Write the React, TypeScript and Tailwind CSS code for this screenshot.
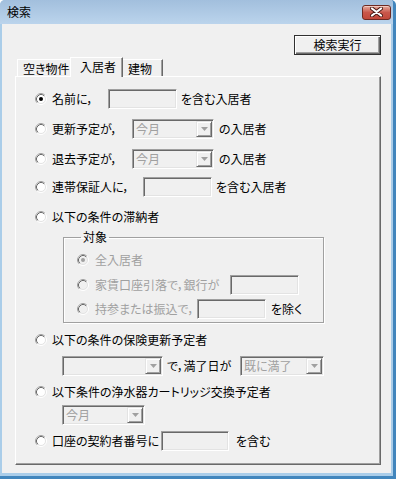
const sunken =
  "border border-t-[#a0a0a0] border-l-[#a0a0a0] border-r-white border-b-white shadow-[inset_1px_1px_0_#696969,inset_-1px_-1px_0_#e3e3e3]";

function Radio({ checked = false, disabled = false }: { checked?: boolean; disabled?: boolean }) {
  return (
    <svg width="12" height="12" viewBox="0 0 12 12" className="shrink-0">
      <circle cx="6" cy="6" r="4.5" fill={disabled ? "#f0f0f0" : "#ffffff"} />
      <circle cx="6" cy="6" r="5.5" fill="none" stroke="#ffffff" />
      <path d="M2.11 9.89 A5.5 5.5 0 0 1 9.89 2.11" fill="none" stroke="#a0a0a0" />
      <circle cx="6" cy="6" r="4.5" fill="none" stroke="#e3e3e3" />
      <path d="M2.82 9.18 A4.5 4.5 0 0 1 9.18 2.82" fill="none" stroke="#696969" />
      {checked && <circle cx="6" cy="6" r="2" fill={disabled ? "#a0a0a0" : "#000000"} />}
    </svg>
  );
}

function Edit({ className }: { className: string }) {
  return <div className={`h-[20px] shrink-0 bg-[#f0f0f0] ${sunken} ${className}`} />;
}

function Combo({ className, value = "" }: { className: string; value?: string }) {
  return (
    <div className={`flex h-[20px] shrink-0 items-stretch bg-[#f0f0f0] p-[1px] ${sunken} ${className}`}>
      <span className="flex flex-1 items-center pl-[2px] text-[#a0a0a0]">{value}</span>
      <span className="flex w-[16px] items-center justify-center border border-t-[#e3e3e3] border-l-[#e3e3e3] border-r-[#696969] border-b-[#696969] bg-[#f0f0f0] shadow-[inset_1px_1px_0_#ffffff,inset_-1px_-1px_0_#a0a0a0]">
        <svg width="7" height="4" viewBox="0 0 7 4">
          <path d="M0 0h7L3.5 4z" fill="#a0a0a0" />
        </svg>
      </span>
    </div>
  );
}

export default function App() {
  return (
    <div className="flex h-[479px] w-[396px] flex-col overflow-hidden rounded-t-[5px] border-r-[3px] border-b-[3px] border-[#4286bd] bg-[#aacde9] font-['Noto_Sans_CJK_JP',sans-serif] text-[12px] leading-none text-black [font-feature-settings:'palt']">
      {/* title bar */}
      <div className="flex h-[24px] shrink-0 items-center bg-gradient-to-b from-[#a2bfdd] to-[#bbd4ec] pl-[7px] pr-[2px]">
        <span className="text-[12px]">検索</span>
        <button className="ml-auto flex h-[15px] w-[29px] items-center justify-center rounded-[3px] border border-[#6e2a22] bg-gradient-to-b from-[#e4aa9d] via-[#c9574b] to-[#c2483a] shadow-[inset_0_1px_0_#f2c9bf]">
          <svg width="13" height="10" viewBox="0 0 13 10">
            <path d="M2 1.5L11 8.5M11 1.5L2 8.5" stroke="#4a1a14" strokeWidth="4" strokeLinecap="round" />
            <path d="M2 1.5L11 8.5M11 1.5L2 8.5" stroke="#ffffff" strokeWidth="2.2" strokeLinecap="round" />
          </svg>
        </button>
      </div>

      {/* frame */}
      <div className="flex flex-1 px-[2px] pb-[3px]">
        <div className="flex flex-1 flex-col bg-[#f0f0f0] pl-[13px] pr-[10px] pt-[11px]">
          <div className="flex justify-end">
            <button className="flex h-[20px] w-[87px] items-center justify-center border border-[#303030] bg-[#f0f0f0] shadow-[inset_1px_1px_0_#ffffff,inset_-1px_-1px_0_#696969,inset_-2px_-2px_0_#a0a0a0]">
              検索実行
            </button>
          </div>

          {/* tabs */}
          <div className="mt-[2px] flex h-[19px] items-end pl-[2px]">
            <div className="flex h-[17px] w-[53px] items-center border-t border-l border-white pl-[5px] pt-[1px]">空き物件</div>
            <div className="relative z-10 -mb-[1px] flex h-[20px] w-[53px] items-center border-t border-l border-r border-t-white border-l-white border-r-[#696969] bg-[#f0f0f0] pb-[1px] pl-[9px] shadow-[inset_-1px_0_0_#a0a0a0]">
              入居者
            </div>
            <div className="flex h-[17px] w-[40px] items-center border-t border-r border-t-white border-r-[#696969] pl-[5px] pt-[1px] shadow-[inset_-1px_0_0_#a0a0a0]">
              建物
            </div>
          </div>

          {/* panel */}
          <div className="flex h-[389px] w-[366px] flex-col border border-t-white border-l-white border-r-[#696969] border-b-[#696969] pl-[19px] pt-[12px] shadow-[inset_-1px_-1px_0_#a0a0a0]">
            <div className="flex h-[20px] items-center">
              <Radio checked />
              <span className="ml-[5px] w-[56px] shrink-0">名前に，</span>
              <Edit className="w-[69px]" />
              <span className="ml-[4px]">を含む入居者</span>
            </div>
            <div className="mt-[10px] flex h-[20px] items-center">
              <Radio />
              <span className="ml-[5px] w-[80px] shrink-0">更新予定が，</span>
              <Combo className="w-[82px]" value="今月" />
              <span className="ml-[5px]">の入居者</span>
            </div>
            <div className="mt-[10px] flex h-[20px] items-center">
              <Radio />
              <span className="ml-[5px] w-[80px] shrink-0">退去予定が，</span>
              <Combo className="w-[82px]" value="今月" />
              <span className="ml-[5px]">の入居者</span>
            </div>
            <div className="mt-[8px] flex h-[20px] items-center">
              <Radio />
              <span className="ml-[5px] w-[91px] shrink-0">連帯保証人に，</span>
              <Edit className="w-[69px]" />
              <span className="ml-[4px]">を含む入居者</span>
            </div>
            <div className="mt-[10px] flex h-[20px] items-center">
              <Radio />
              <span className="ml-[5px]">以下の条件の滞納者</span>
            </div>

            <fieldset className="ml-[28px] mt-[2px] w-[261px] border border-[#a0a0a0] pb-[3px] pl-[13px] shadow-[inset_1px_1px_0_#ffffff,1px_1px_0_#ffffff]">
              <legend className="ml-[4px] px-[2px] leading-[16px]">対象</legend>
              <div className="mt-[5px] flex h-[20px] items-center text-[#a0a0a0]">
                <Radio checked disabled />
                <span className="ml-[6px]">全入居者</span>
              </div>
              <div className="mt-[5px] flex h-[20px] items-center text-[#a0a0a0]">
                <Radio disabled />
                <span className="ml-[6px] w-[135px] shrink-0">家賃口座引落で，銀行が</span>
                <Edit className="w-[69px]" />
              </div>
              <div className="mt-[4px] flex h-[20px] items-center">
                <Radio disabled />
                <span className="ml-[6px] w-[102px] shrink-0 text-[#a0a0a0]">持参または振込で，</span>
                <Edit className="w-[69px]" />
                <span className="ml-[5px]">を除く</span>
              </div>
            </fieldset>

            <div className="mt-[7px] flex h-[20px] items-center">
              <Radio />
              <span className="ml-[5px]">以下の条件の保険更新予定者</span>
            </div>
            <div className="ml-[27px] mt-[6px] flex h-[20px] items-center">
              <Combo className="w-[101px]" />
              <span className="ml-[4px] w-[73px] shrink-0">で，満了日が</span>
              <Combo className="w-[84px]" value="既に満了" />
            </div>
            <div className="mt-[6px] flex h-[20px] items-center">
              <Radio />
              <span className="ml-[5px]">以下条件の浄水器カートリッジ交換予定者</span>
            </div>
            <div className="ml-[27px] mt-[3px] flex h-[20px] items-center">
              <Combo className="w-[83px]" value="今月" />
            </div>
            <div className="mt-[6px] flex h-[20px] items-center">
              <Radio />
              <span className="ml-[5px] w-[109px] shrink-0">口座の契約者番号に</span>
              <Edit className="w-[68px]" />
              <span className="ml-[7px]">を含む</span>
            </div>
          </div>
        </div>
      </div>
    </div>
  );
}
